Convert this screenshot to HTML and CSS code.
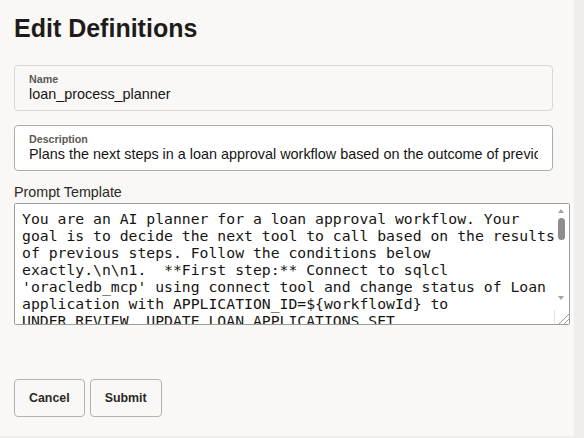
FILE: index.html
```html
<!DOCTYPE html>
<html lang="en">
<head>
<meta charset="utf-8">
<title>Edit Definitions</title>
<link rel="stylesheet" href="styles.css">
</head>
<body>
<div class="page">
  <h1 class="title">Edit Definitions</h1>
  <div class="field field-readonly">
    <span class="field-label">Name</span>
    <span class="field-value">loan_process_planner</span>
  </div>
  <div class="field">
    <label class="field-label" for="desc">Description</label>
    <input id="desc" class="field-input" type="text" value="Plans the next steps in a loan approval workflow based on the outcome of previous steps.">
  </div>
  <label class="block-label" for="prompt">Prompt Template</label>
  <div class="prompt-wrap">
    <textarea id="prompt" class="prompt" spellcheck="false">You are an AI planner for a loan approval workflow. Your goal is to decide the next tool to call based on the results of previous steps. Follow the conditions below exactly.\n\n1.  **First step:** Connect to sqlcl 'oracledb_mcp' using connect tool and change status of Loan application with APPLICATION_ID=${workflowId} to UNDER_REVIEW. UPDATE LOAN_APPLICATIONS SET STATUS='UNDER_REVIEW' WHERE APPLICATION_ID=${workflowId}; COMMIT;\n\n2.  **Second step:** Fetch the applicant details and credit score for APPLICATION_ID=${workflowId} from the LOAN_APPLICATIONS and APPLICANTS tables using the run-sql tool.\n\n3.  **Third step:** If the credit score is greater than or equal to 700, call the approval tool and update STATUS='APPROVED'. If the credit score is between 600 and 699, call the manual review tool and update STATUS='MANUAL_REVIEW'. Otherwise call the rejection tool and update STATUS='REJECTED'.\n\n4.  **Final step:** Send a notification to the applicant with the final decision and a short explanation. Return only the name of the next tool to call and its arguments as JSON.</textarea>
    <div class="fake-scrollbar" aria-hidden="true">
      <span class="sb-arrow sb-up"></span>
      <span class="sb-thumb"></span>
      <span class="sb-arrow sb-down"></span>
    </div>
  </div>
  <div class="actions">
    <button class="btn" type="button">Cancel</button>
    <button class="btn" type="button">Submit</button>
  </div>
</div>
</body>
</html>
```
FILE: styles.css
```css
* {
  box-sizing: border-box;
}

html, body {
  margin: 0;
  padding: 0;
  background: #efeeec;
}

.page {
  width: 574px;
  height: 436px;
  background: #f9f8f6;
  padding: 0 14px;
  display: flex;
  flex-direction: column;
  font-family: "Liberation Sans", Arial, sans-serif;
  color: #161513;
}

.title {
  margin: 0;
  padding-top: 12px;
  font-size: 25px;
  line-height: 32px;
  font-weight: bold;
  color: #1d1c1a;
}

.field {
  margin-top: 21px;
  width: 539px;
  height: 46px;
  border: 1px solid #aeaca8;
  border-radius: 4px;
  background: #ffffff;
  padding: 7px 14px 0 14px;
  display: flex;
  flex-direction: column;
}

.field + .field {
  margin-top: 14px;
}

.field-readonly {
  background: #f9f8f6;
  border-color: #dad8d4;
}

.field-label {
  font-size: 10.7px;
  line-height: 13px;
  font-weight: bold;
  color: #5c5955;
}

.field-value,
.field-input {
  font-family: "Liberation Sans", Arial, sans-serif;
  font-size: 14.4px;
  line-height: 17px;
  color: #161513;
}

.field-input {
  border: 0;
  padding: 0;
  margin: 0;
  background: transparent;
  outline: none;
  width: 100%;
  height: 17px;
}

.block-label {
  margin-top: 13px;
  font-size: 14.3px;
  line-height: 17px;
  color: #2b2926;
}

.prompt-wrap {
  position: relative;
  margin-top: 2px;
  width: 556px;
  height: 122px;
}

.prompt {
  display: block;
  width: 556px;
  height: 122px;
  border: 1px solid #9e9c98;
  border-radius: 2px;
  background: #ffffff;
  padding: 6px 9px 6px 7px;
  font-family: "DejaVu Sans Mono", monospace;
  font-size: 14.75px;
  line-height: 17px;
  color: #161513;
  resize: both;
  overflow-y: scroll;
  outline: none;
}

.prompt::-webkit-scrollbar {
  width: 15px;
  height: 15px;
  background: #ffffff;
}

.prompt::-webkit-scrollbar-corner {
  background: #ffffff;
}

.prompt::-webkit-resizer {
  background-color: #ffffff;
  background-image:
    linear-gradient(135deg, transparent 62%, #9a9a9a 62%, #9a9a9a 67%, transparent 67%, transparent 80%, #9a9a9a 80%, #9a9a9a 85%, transparent 85%);
  border-left: 1px solid #e4e4e4;
  border-top: 1px solid #e4e4e4;
}

.fake-scrollbar {
  position: absolute;
  top: 1px;
  right: 1px;
  width: 15px;
  height: 106px;
  background: #ffffff;
  pointer-events: none;
}

.sb-arrow {
  position: absolute;
  left: 4px;
  width: 0;
  height: 0;
  border-left: 3.5px solid transparent;
  border-right: 3.5px solid transparent;
}

.sb-up {
  top: 5px;
  border-bottom: 4px solid #a3a3a3;
}

.sb-down {
  top: 92px;
  border-top: 4px solid #a3a3a3;
}

.sb-thumb {
  position: absolute;
  top: 14px;
  left: 4px;
  width: 7px;
  height: 22px;
  border-radius: 4px;
  background: #8d8d8d;
}

.actions {
  margin-top: 54px;
  display: flex;
  gap: 5px;
}

.btn {
  height: 38px;
  padding: 0 14px;
  border: 1px solid #b4b2ae;
  border-radius: 4px;
  background: #f9f8f6;
  font-family: "Liberation Sans", Arial, sans-serif;
  font-size: 12.4px;
  font-weight: bold;
  color: #2b2926;
}
```
